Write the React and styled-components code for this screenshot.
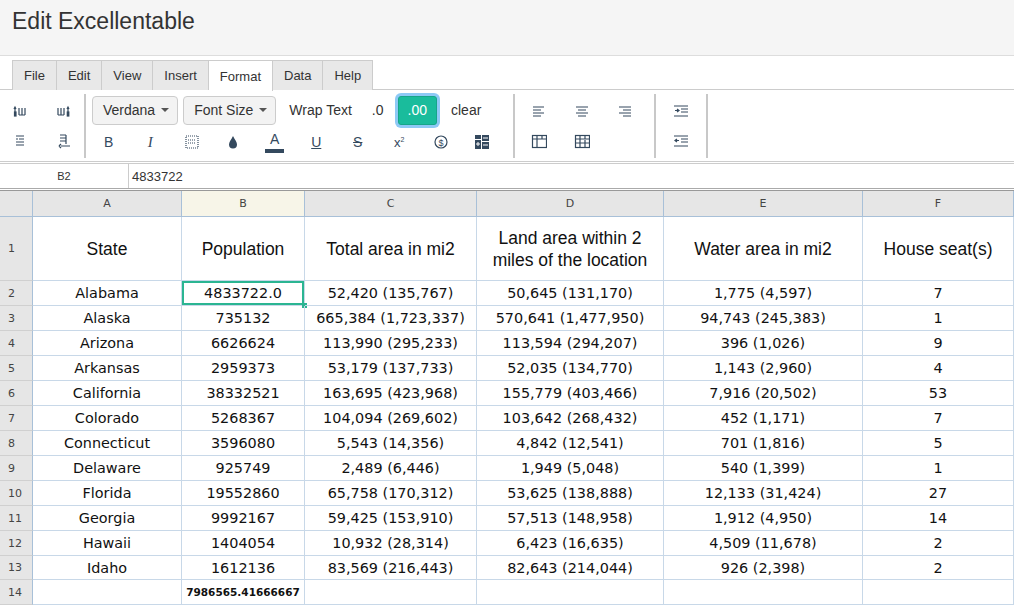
import React from "react";
import styled, { createGlobalStyle } from "styled-components";

const G = createGlobalStyle`
  body{margin:0;font-family:"Liberation Sans",Arial,sans-serif;background:#fff;overflow:hidden;}
`;
const TitleBar = styled.div`height:56px;box-sizing:border-box;background:#f5f5f5;border-bottom:1px solid #ddd;display:flex;align-items:flex-start;padding:8px 0 0 12px;font-size:23px;color:#333;`;
const Tabs = styled.div`display:flex;padding:4px 0 0 12px;border-bottom:1px solid #ccc;height:29px;background:#fff;`;
const Tab = styled.div`padding:0 11px;display:flex;align-items:center;font-size:13px;color:#333;border:1px solid #ccc;border-left:${p=>p.first?"1px solid #ccc":"none"};border-bottom:none;background:${p=>p.active?"#fff":"#e8e8e8"};margin-bottom:${p=>p.active?"-1px":"0"};height:${p=>p.active?"30px":"29px"};`;
const Toolbar = styled.div`display:flex;height:72px;border-bottom:1px solid #ccc;padding-top:4px;box-sizing:border-box;`;
const Group = styled.div`display:grid;grid-template-columns:repeat(${p=>p.cols},${p=>p.w}px);grid-auto-rows:30px;align-items:center;justify-items:center;padding:${p=>p.pad||"0"};border-right:${p=>p.noborder?"none":"2px solid #c8c8c8"};height:64px;align-content:center;`;
const Row = styled.div`display:flex;align-items:center;gap:0;height:32px;`;
const Col = styled.div`display:flex;flex-direction:column;padding:0 10px 0 6px;border-right:2px solid #c8c8c8;height:64px;justify-content:center;`;
const Drop = styled.div`height:29px;box-sizing:border-box;border:1px solid #ccc;border-radius:4px;background:#f3f3f3;padding:0 8px 0 10px;display:flex;align-items:center;font-size:14px;color:#333;margin-right:5px;gap:6px;&::after{content:"";border:4px solid transparent;border-top-color:#555;margin-top:4px;}`;
const TBtn = styled.div`font-size:14px;color:#333;padding:0 8px;height:29px;display:flex;align-items:center;margin-right:${p=>p.mr||0}px;`;
const Green = styled.div`font-size:14px;color:#fff;background:#1abc9c;height:27px;padding:0 9px;display:flex;align-items:center;border:1px solid #17a589;border-radius:3px;box-shadow:0 0 0 3px #8ec9f5;margin:0 6px;`;
const IconRow = styled.div`display:grid;grid-template-columns:repeat(10,41.5px);justify-items:center;height:32px;align-items:center;margin-left:-4px;`;
const Formula = styled.div`display:flex;height:24px;margin-top:1px;border-top:1px solid #ccc;border-bottom:1px solid #aaa;`;
const CellRef = styled.div`width:128px;font-size:11px;color:#333;display:flex;align-items:center;justify-content:center;border-right:1px solid #ccc;`;
const FInput = styled.div`flex:1;font-size:13px;color:#333;display:flex;align-items:center;padding-left:3px;`;
const Grid = styled.div`display:grid;grid-template-columns:33px 149px 123px 172px 187px 199px 151px;margin-top:1px;border-top:1px solid #999;`;
const H = styled.div`height:25px;background:${p=>p.sel?"#f7f5e8":"#e6e6e6"};border-right:1px solid #a8c0d8;border-bottom:1px solid #a8c0d8;display:flex;align-items:center;justify-content:center;font-size:11px;color:#444;font-family:"DejaVu Sans",Verdana,sans-serif;`;
const RH = styled.div`height:${p=>p.h}px;background:#e6e6e6;border-right:1px solid #a8c0d8;border-bottom:1px solid #d0d0d0;display:flex;align-items:center;padding-left:8px;font-size:11px;color:#444;font-family:"DejaVu Sans",Verdana,sans-serif;box-sizing:border-box;`;
const C = styled.div`height:${p=>p.h}px;box-sizing:border-box;border-right:1px solid #c8d8e8;border-bottom:1px solid #c8d8e8;display:flex;align-items:center;justify-content:center;text-align:center;color:#111;position:relative;white-space:${p=>p.hd?"normal":"nowrap"};
  padding:${p=>p.hd?"0 12px":"0"};line-height:${p=>p.hd?"22px":"normal"};
  font-family:${p=>p.hd?'"Liberation Sans",Arial':'"DejaVu Sans",Verdana'},sans-serif;font-size:${p=>p.hd?"17.5px":p.b?"10.5px":"14.4px"};font-weight:${p=>p.b?"bold":"normal"};
  ${p=>p.sel&&"box-shadow:inset 0 0 0 2px #2bb592;"}`;
const Handle = styled.div`position:absolute;right:-3px;bottom:-3px;width:5px;height:5px;background:#2bb592;`;

const S = ({children,w=16,h=16}) => <svg width={w} height={h} viewBox="0 0 16 16" fill="none" stroke="#34495e" strokeWidth="1.2">{children}</svg>;
const ic = {
  colL:<S><path d="M2 4v9M1 6l1-2 1 2M6 5v7M9 5v7M12 5v7M6 12h6" /><rect x="1.5" y="9" width="1.5" height="4" fill="#34495e"/></S>,
  colR:<S><path d="M3 5v7M6 5v7M9 5v7M3 12h6M13 4v9M12 6l1-2 1 2"/><rect x="12.3" y="9" width="1.5" height="4" fill="#34495e"/></S>,
  rowU:<S><path d="M3 3h8M6 6h5M3 9h8M3 12h8M3 6h2"/></S>,
  rowD:<S><path d="M5 2h6M5 5h6M5 8h6M11 2v9M6 13h9M4 13l2-2M4 13l2 2"/></S>,
  B:<span style={{fontSize:14,color:"#34495e"}}>B</span>,
  I:<span style={{fontSize:15,color:"#34495e",fontStyle:"italic",fontFamily:"Liberation Serif"}}>I</span>,
  fmt:<S><rect x="2" y="2" width="12" height="12" strokeDasharray="1 1"/><path d="M4 6h8M4 9h8" strokeDasharray="1 1"/></S>,
  drop:<svg width="14" height="16" viewBox="0 0 14 16"><path d="M7 2C5 6 3 8 3 10.5a4 4 0 0 0 8 0C11 8 9 6 7 2z" fill="#34495e"/></svg>,
  A:<span style={{display:"flex",flexDirection:"column",alignItems:"center",fontSize:14,color:"#34495e",lineHeight:"14px"}}>A<span style={{width:19,height:4,background:"#34495e",marginTop:3}}/></span>,
  U:<span style={{fontSize:14,color:"#34495e",textDecoration:"underline"}}>U</span>,
  Sx:<span style={{fontSize:14,color:"#34495e",textDecoration:"line-through"}}>S</span>,
  sup:<span style={{fontSize:13,color:"#34495e"}}>x<sup style={{fontSize:7}}>2</sup></span>,
  dollar:<S><circle cx="8" cy="8" r="6"/><text x="8" y="11.5" fontSize="9" textAnchor="middle" fill="#34495e" stroke="none">$</text></S>,
  merge:<svg width="14" height="14" viewBox="0 0 14 14" fill="#34495e"><rect x="0" y="0" width="6" height="4"/><rect x="0" y="5" width="6" height="9"/><rect x="7" y="0" width="7" height="6"/><rect x="7" y="7" width="7" height="7"/><path d="M1 9h4M3 7v4M8 3h5M8 10h5" stroke="#fff" strokeWidth="1"/></svg>,
  aL:<S><path d="M2 4h11M2 7h8M2 10h11M2 13h8"/></S>,
  aC:<S><path d="M2 4h12M4 7h8M2 10h12M4 13h8"/></S>,
  aR:<S><path d="M2 4h12M6 7h8M2 10h12M6 13h8"/></S>,
  t1:<S><rect x="1.5" y="2.5" width="14" height="12"/><path d="M1.5 6h14M6 2.5v12M11 2.5v3.5"/></S>,
  t2:<S><rect x="1.5" y="2.5" width="14" height="12"/><path d="M1.5 6h14M1.5 10h14M6 2.5v12M11 2.5v3.5M11 7v7" /></S>,
  indR:<S><path d="M1 3h14M8 6h7M8 9h7M1 13h14M2 7.5h4M4 6l2 1.5-2 1.5"/></S>,
  indL:<S><path d="M1 3h14M8 6h7M8 9h7M1 13h14M2 7.5h4M4 6l-2 1.5 2 1.5"/></S>,
};

const rows = [
 ["Alabama","4833722.0","52,420 (135,767)","50,645 (131,170)","1,775 (4,597)","7"],
 ["Alaska","735132","665,384 (1,723,337)","570,641 (1,477,950)","94,743 (245,383)","1"],
 ["Arizona","6626624","113,990 (295,233)","113,594 (294,207)","396 (1,026)","9"],
 ["Arkansas","2959373","53,179 (137,733)","52,035 (134,770)","1,143 (2,960)","4"],
 ["California","38332521","163,695 (423,968)","155,779 (403,466)","7,916 (20,502)","53"],
 ["Colorado","5268367","104,094 (269,602)","103,642 (268,432)","452 (1,171)","7"],
 ["Connecticut","3596080","5,543 (14,356)","4,842 (12,541)","701 (1,816)","5"],
 ["Delaware","925749","2,489 (6,446)","1,949 (5,048)","540 (1,399)","1"],
 ["Florida","19552860","65,758 (170,312)","53,625 (138,888)","12,133 (31,424)","27"],
 ["Georgia","9992167","59,425 (153,910)","57,513 (148,958)","1,912 (4,950)","14"],
 ["Hawaii","1404054","10,932 (28,314)","6,423 (16,635)","4,509 (11,678)","2"],
 ["Idaho","1612136","83,569 (216,443)","82,643 (214,044)","926 (2,398)","2"],
];
const heads=["State","Population","Total area in mi2","Land area within 2 miles of the location","Water area in mi2","House seat(s)"];

export default function App(){
  return <>
    <G/>
    <TitleBar>Edit Excellentable</TitleBar>
    <Tabs>{["File","Edit","View","Insert","Format","Data","Help"].map((t,i)=><Tab key={t} first={i===0} active={t==="Format"}>{t}</Tab>)}</Tabs>
    <Toolbar>
      <Group cols={2} w={42} pad="0 0 0 0">{ic.colL}{ic.colR}{ic.rowU}{ic.rowD}</Group>
      <Col>
        <Row>
          <Drop>Verdana</Drop><Drop>Font Size</Drop>
          <TBtn mr={4}>Wrap Text</TBtn><TBtn>.0</TBtn><Green>.00</Green><TBtn>clear</TBtn>
        </Row>
        <IconRow>{ic.B}{ic.I}{ic.fmt}{ic.drop}{ic.A}{ic.U}{ic.Sx}{ic.sup}{ic.dollar}{ic.merge}</IconRow>
      </Col>
      <Group cols={3} w={43} pad="0 8px 0 2px">{ic.aL}{ic.aC}{ic.aR}{ic.t1}{ic.t2}<span/></Group>
      <Group cols={1} w={46} pad="0 2px">{ic.indR}{ic.indL}</Group>
    </Toolbar>
    <Formula><CellRef>B2</CellRef><FInput>4833722</FInput></Formula>
    <Grid>
      <H/>{["A","B","C","D","E","F"].map(l=><H key={l} sel={l==="B"}>{l}</H>)}
      <RH h={64}>1</RH>{heads.map(h=><C key={h} h={64} hd>{h}</C>)}
      {rows.map((r,i)=><React.Fragment key={i}>
        <RH h={i===11?24:25}>{i+2}</RH>
        {r.map((v,j)=><C key={j} h={i===11?24:25} sel={i===0&&j===1}>{v}{i===0&&j===1&&<Handle/>}</C>)}
      </React.Fragment>)}
      <RH h={25}>14</RH><C h={25}/><C h={25} b>7986565.41666667</C><C h={25}/><C h={25}/><C h={25}/><C h={25}/>
    </Grid>
  </>;
}
